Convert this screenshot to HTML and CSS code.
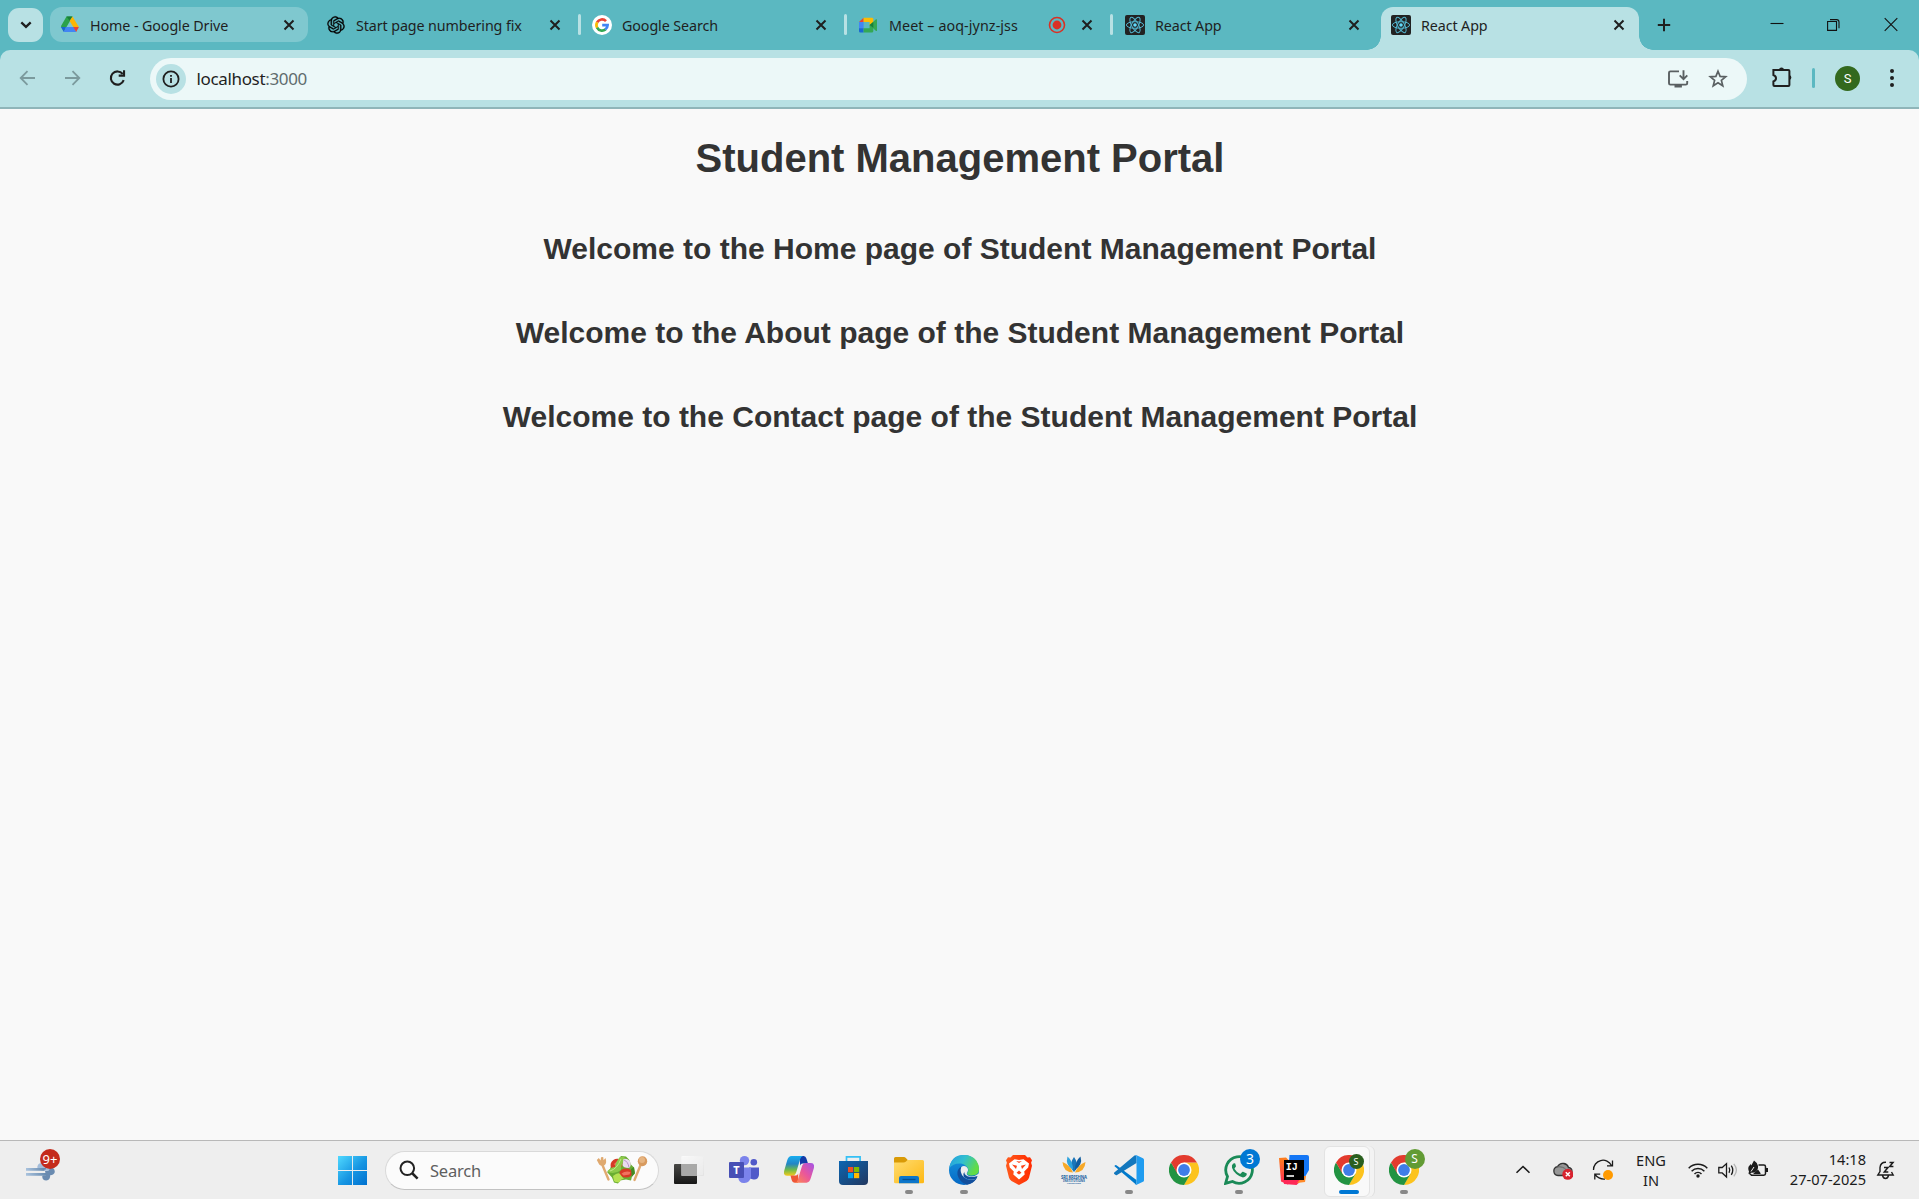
FILE: index.html
```html
<!DOCTYPE html>
<html lang="en">
<head>
<meta charset="utf-8">
<title>React App</title>
<link rel="stylesheet" href="styles.css">
</head>
<body>
<svg class="defs" width="0" height="0" aria-hidden="true">
  <defs>
    <linearGradient id="win" x1="0" y1="0" x2="1" y2="1"><stop offset="0" stop-color="#50d9ff"/><stop offset=".55" stop-color="#1695e2"/><stop offset="1" stop-color="#0070cf"/></linearGradient>
    <linearGradient id="dark" x1="0" y1="0" x2="0" y2="1"><stop offset="0" stop-color="#484846"/><stop offset="1" stop-color="#171716"/></linearGradient>
    <linearGradient id="glass" x1="0" y1="0" x2="1" y2="1"><stop offset="0" stop-color="#fff"/><stop offset="1" stop-color="#ddd"/></linearGradient>
    <linearGradient id="cpA" x1="0" y1="0" x2="0" y2="1"><stop offset="0" stop-color="#18aef0"/><stop offset=".4" stop-color="#2385c5"/><stop offset=".7" stop-color="#6fba4a"/><stop offset="1" stop-color="#f4c91c"/></linearGradient>
    <linearGradient id="cpB" x1="1" y1="0" x2="0" y2="1"><stop offset="0" stop-color="#a254e8"/><stop offset=".5" stop-color="#e9569c"/><stop offset="1" stop-color="#ff8a4c"/></linearGradient>
    <linearGradient id="store" x1="0" y1="0" x2="1" y2="1"><stop offset="0" stop-color="#0b66b2"/><stop offset="1" stop-color="#22375f"/></linearGradient>
    <linearGradient id="folder" x1="0" y1="0" x2="1" y2="1"><stop offset="0" stop-color="#ffdc70"/><stop offset="1" stop-color="#fdb813"/></linearGradient>
    <linearGradient id="edgeTop" x1="0" y1="0" x2="1" y2=".4"><stop offset="0" stop-color="#249ce0"/><stop offset=".5" stop-color="#31bfd0"/><stop offset="1" stop-color="#62dc45"/></linearGradient>
    <linearGradient id="edgeLow" x1="0" y1="0" x2="0" y2="1"><stop offset="0" stop-color="#1797df"/><stop offset="1" stop-color="#0568c4"/></linearGradient>
    <linearGradient id="brave" x1="0" y1="0" x2="1" y2="0"><stop offset="0" stop-color="#ff5a1c"/><stop offset="1" stop-color="#ff2a00"/></linearGradient>
    <linearGradient id="ijA" x1="0" y1="0" x2="0" y2="1"><stop offset="0" stop-color="#fc801d"/><stop offset="1" stop-color="#fe2857"/></linearGradient>
    <linearGradient id="wind" x1="0" y1="0" x2="1" y2="0"><stop offset="0" stop-color="#a9c2dd"/><stop offset="1" stop-color="#6488ad"/></linearGradient>
    <symbol id="x" viewBox="0 0 12 12"><path d="M1.5 1.5l9 9M10.5 1.5l-9 9" stroke="#1f1f1f" stroke-width="2" fill="none"/></symbol>
    <symbol id="react" viewBox="0 0 20 20"><rect width="20" height="20" rx="2" fill="#222"/><g fill="none" stroke="#52b5ce" stroke-width="1"><ellipse cx="10" cy="10" rx="8.6" ry="3.3"/><ellipse cx="10" cy="10" rx="8.6" ry="3.3" transform="rotate(60 10 10)"/><ellipse cx="10" cy="10" rx="8.6" ry="3.3" transform="rotate(120 10 10)"/></g><circle cx="10" cy="10" r="1.8" fill="#61dafb"/></symbol>
    <symbol id="chrome" viewBox="0 0 30 30">
      <path d="M28 7.5A15 15 0 0 1 15 30L21.1 18.5 15 7.5z" fill="#fcc31e"/>
      <path d="M2 7.5A15 15 0 0 0 15 30l6.5-11.3L15 15 8.8 18.6z" fill="#229342"/>
      <path d="M15 7.5H28A15 15 0 0 0 2 7.5l6.5 11.2z" fill="#e33b2e"/>
      <circle cx="15" cy="15" r="7.5" fill="#fff"/><circle cx="15" cy="15" r="5.9" fill="#3f7de8"/>
    </symbol>
  </defs>
</svg>

<header class="tabstrip">
  <button class="tabsearch"><svg width="12" height="8" viewBox="0 0 12 8"><path d="M1.3 1.3L6 5.8l4.7-4.5" fill="none" stroke="#1f1f1f" stroke-width="2.3"/></svg></button>
  <nav class="tabs">
    <div class="tab hovered">
      <svg class="fav" viewBox="0 0 20 20"><path d="M6.5 1.5h6L10 6 4 16.2.9 11.3z" fill="#2ba24c"/><path d="M6.5 1.5h6L9.8 6z" fill="#188038"/><path d="M12.5 1.5L18.9 12h-5.6L9.6 6z" fill="#fbb604"/><path d="M.9 12H6l-2.2 5z" fill="#1967d2"/><path d="M5.9 12h8l2.4 5H3.8z" fill="#4285f4"/><path d="M13.3 12h5.6l-2.7 5z" fill="#ea4335"/></svg>
      <span class="title">Home - Google Drive</span><svg class="close"><use href="#x"/></svg>
    </div>
    <div class="tab">
      <svg class="fav" viewBox="-1.8 -1.8 27.6 27.6"><path stroke="#111" stroke-width=".4" d="M22.2819 9.8211a5.9847 5.9847 0 0 0-.5157-4.9108 6.0462 6.0462 0 0 0-6.5098-2.9A6.0651 6.0651 0 0 0 4.9807 4.1818a5.9847 5.9847 0 0 0-3.9977 2.9 6.0462 6.0462 0 0 0 .7427 7.0966 5.98 5.98 0 0 0 .511 4.9107 6.051 6.051 0 0 0 6.5146 2.9001A5.9847 5.9847 0 0 0 13.2599 24a6.0557 6.0557 0 0 0 5.7718-4.2058 5.9894 5.9894 0 0 0 3.9977-2.9001 6.0557 6.0557 0 0 0-.7475-7.0729zm-9.022 12.6081a4.4755 4.4755 0 0 1-2.8764-1.0408l.1419-.0804 4.7783-2.7582a.7948.7948 0 0 0 .3927-.6813v-6.7369l2.02 1.1686a.071.071 0 0 1 .038.052v5.5826a4.504 4.504 0 0 1-4.4945 4.4944zm-9.6607-4.1254a4.4708 4.4708 0 0 1-.5346-3.0137l.142.0852 4.783 2.7582a.7712.7712 0 0 0 .7806 0l5.8428-3.3685v2.3324a.0804.0804 0 0 1-.0332.0615L9.74 19.9502a4.4992 4.4992 0 0 1-6.1408-1.6464zM2.3408 7.8956a4.485 4.485 0 0 1 2.3655-1.9728V11.6a.7664.7664 0 0 0 .3879.6765l5.8144 3.3543-2.0201 1.1685a.0757.0757 0 0 1-.071 0l-4.8303-2.7865A4.504 4.504 0 0 1 2.3408 7.872zm16.5963 3.8558L13.1038 8.364 15.1192 7.2a.0757.0757 0 0 1 .071 0l4.8303 2.7913a4.4944 4.4944 0 0 1-.6765 8.1042v-5.6772a.79.79 0 0 0-.407-.667zm2.0107-3.0231l-.142-.0852-4.7735-2.7818a.7759.7759 0 0 0-.7854 0L9.409 9.2297V6.8974a.0662.0662 0 0 1 .0284-.0615l4.8303-2.7866a4.4992 4.4992 0 0 1 6.6802 4.66zM8.3065 12.863l-2.02-1.1638a.0804.0804 0 0 1-.038-.0567V6.0742a4.4992 4.4992 0 0 1 7.3757-3.4537l-.142.0805L8.704 5.459a.7948.7948 0 0 0-.3927.6813zm1.0976-2.3654l2.602-1.4998 2.6069 1.4998v2.9994l-2.5974 1.4997-2.6067-1.4997Z"/></svg>
      <span class="title">Start page numbering fix</span><svg class="close"><use href="#x"/></svg>
    </div>
    <div class="tab sep">
      <svg class="fav" viewBox="0 0 20 20"><circle cx="10" cy="10" r="10" fill="#fff"/><g fill="none" stroke-width="2.7"><path d="M5.1 7.4A5.6 5.6 0 0 1 14 6.1" stroke="#ea4335"/><path d="M5.2 12.8A5.6 5.6 0 0 1 5.2 7.2" stroke="#fbbc05"/><path d="M13.5 14.4A5.6 5.6 0 0 1 5.1 12.6" stroke="#34a853"/><path d="M10.2 10.2H15.6A5.6 5.6 0 0 1 13.3 14.5" stroke="#4285f4"/></g></svg>
      <span class="title">Google Search</span><svg class="close"><use href="#x"/></svg>
    </div>
    <div class="tab sep">
      <svg class="fav" viewBox="0 0 20 20"><path d="M5.6 2.7V7H1z" fill="#ea4335"/><path d="M1 7h4.6v6.5H1z" fill="#4285f4"/><path d="M1 13.2h4.6v4.3H2.4A1.4 1.4 0 0 1 1 16z" fill="#1967d2"/><path d="M5.6 2.7h8.2A1.5 1.5 0 0 1 15.3 4v3.6L11.6 10.5V7H5.6z" fill="#fbbc04"/><path d="M5.6 13.2h6V10l3.7 3v3.2a1.4 1.4 0 0 1-1.4 1.3H5.6z" fill="#34a853"/><path d="M11.6 10.1L18 4.3q1-.4 1 .7v10.4q0 1-1 .5z" fill="#34a853"/><path d="M11.6 10.1l3.7-3v6z" fill="#188038"/></svg>
      <span class="title wide">Meet – aoq-jynz-jss</span>
      <svg class="rec" viewBox="0 0 18 18"><circle cx="9" cy="9" r="7.5" fill="none" stroke="#d93025" stroke-width="1.6"/><circle cx="9" cy="9" r="4.4" fill="#d93025"/></svg>
      <svg class="close"><use href="#x"/></svg>
    </div>
    <div class="tab sep late">
      <svg class="fav"><use href="#react"/></svg>
      <span class="title">React App</span><svg class="close"><use href="#x"/></svg>
    </div>
    <div class="tab active">
      <svg class="fav"><use href="#react"/></svg>
      <span class="title">React App</span><svg class="close"><use href="#x"/></svg>
    </div>
  </nav>
  <svg class="newtab" viewBox="0 0 14 14"><path d="M7 .8v12.4M.8 7h12.4" stroke="#1f1f1f" stroke-width="2"/></svg>
  <div class="winctl">
    <svg viewBox="0 0 16 16"><path d="M1.5 6.5h13" stroke="#111" stroke-width="1.1"/></svg>
    <svg viewBox="0 0 16 16"><path d="M1.6 4.5h8.9v8.9H1.6zM4 2.6h6.6a2.4 2.4 0 0 1 2.4 2.4v6.2" fill="none" stroke="#111" stroke-width="1.1"/></svg>
    <svg viewBox="0 0 16 16"><path d="M1.7 1.2l12.6 12.6M14.3 1.2L1.7 13.8" stroke="#111" stroke-width="1.1"/></svg>
  </div>
</header>

<div class="chrome-fill">
<div class="toolbar">
  <svg class="nav" viewBox="0 0 20 20"><path d="M17 10H3M9.5 3.2L2.7 10l6.8 6.8" fill="none" stroke="#7b9a9d" stroke-width="1.8"/></svg>
  <svg class="nav" viewBox="0 0 20 20"><path d="M2 10h14M9.5 3.2l6.8 6.8-6.8 6.8" fill="none" stroke="#7b9a9d" stroke-width="1.8"/></svg>
  <svg class="nav" viewBox="0 0 20 20"><path d="M15.7 12.2A6.6 6.6 0 1 1 14.7 6" fill="none" stroke="#1f1f1f" stroke-width="2.1"/><path d="M17.1 2.3v6.4h-6.4V6.6h4.3V2.3z" fill="#1f1f1f"/></svg>
  <div class="omnibox">
    <span class="siteinfo"><svg width="18" height="18" viewBox="0 0 18 18"><circle cx="9" cy="9" r="7.6" fill="none" stroke="#1f1f1f" stroke-width="1.8"/><path d="M8.1 8h1.8v5H8.1zM8.1 5h1.8v1.8H8.1z" fill="#1f1f1f"/></svg></span>
    <span class="url">localhost<span class="port">:3000</span></span>
    <svg class="install" viewBox="0 0 22 20"><path d="M12 2.4H3.4A1.4 1.4 0 0 0 2 3.8v10.4a1.4 1.4 0 0 0 1.4 1.4h15.4a1.4 1.4 0 0 0 1.4-1.4V12" fill="none" stroke="#5a6062" stroke-width="1.9"/><path d="M7.5 15.5h7.4v3H7.5z" fill="#5a6062"/><path d="M16.5 1.3v8.4M12.7 6.4l3.8 3.8 3.8-3.8" fill="none" stroke="#5a6062" stroke-width="1.9"/></svg>
    <svg class="star" viewBox="0 0 20 20"><path d="M10 2.2l2.1 5.2 5.6.4-4.3 3.6 1.4 5.4L10 13.8l-4.8 3 1.4-5.4L2.3 7.8l5.6-.4z" fill="none" stroke="#5a6062" stroke-width="1.7"/></svg>
  </div>
  <svg class="ext" viewBox="0 0 22 22"><path d="M2.4 4h15a1 1 0 0 1 1 1v14a1 1 0 0 1-1 1H3.4a1 1 0 0 1-1-1v-3.6q2.6-.8 2.6-3.1T2.4 9z" fill="none" stroke="#1f1f1f" stroke-width="2"/><path d="M8 4a2.5 2.5 0 0 1 5 0zM18.5 9a2.6 2.6 0 0 1 0 5z" fill="#1f1f1f"/></svg>
  <span class="divider"></span>
  <span class="avatar">S</span>
  <svg class="menu" viewBox="0 0 6 20"><g fill="#1f1f1f"><circle cx="3" cy="3" r="2"/><circle cx="3" cy="10" r="2"/><circle cx="3" cy="17" r="2"/></g></svg>
</div>
</div>

<main class="page">
  <h1>Student Management Portal</h1>
  <h2>Welcome to the Home page of Student Management Portal</h2>
  <h2>Welcome to the About page of the Student Management Portal</h2>
  <h2>Welcome to the Contact page of the Student Management Portal</h2>
</main>

<footer class="taskbar">
  <div class="weather">
    <svg width="32" height="32" viewBox="0 0 32 32"><path d="M12.500 15q-1-5.500 4-6l8 4v4l-8-.5z" fill="#a3bcd9"/><g fill="none" stroke="url(#wind)" stroke-width="2.800"><path d="M1 15.400h18.500v.1"/><path d="M1 20.400h21v.1"/></g><path d="M20 17h3.500l1.500-3h3q2 1.500 1.800 4-.6 3-4.600 3.300.3 5-4 5.300-3.800 0-4-4.300l1-.7h2.800z" fill="#6a8bb0"/></svg>
    <span class="badge red">9+</span>
  </div>
  <svg class="start" viewBox="0 0 30 30"><path d="M0 0h30v30H0z" fill="url(#win)"/><path d="M14.500 0h1v30h-1zM0 14.500h30v1H0z" fill="#eee"/></svg>
  <div class="search">
    <svg class="mag" viewBox="0 0 20 20"><circle cx="8.300" cy="8.300" r="6.800" fill="none" stroke="#222" stroke-width="2"/><path d="M13 13l5.600 5.600" stroke="#222" stroke-width="2.500"/></svg>
    <span>Search</span>
    <svg class="salad" viewBox="0 0 52 30">
      <g stroke="#e0a970" stroke-width="2.400" stroke-linecap="round"><path d="M6 9l6.500 15.500M45 9l-6.500 16"/></g>
      <path d="M.8 5l2-2 1.800 2.500L5 2.200l2.200-.2.400 3.300L9.500 3q1.800 5-1 7.200-3 1.500-5.300-.7z" fill="#dfa96f"/>
      <ellipse cx="46.500" cy="6.200" rx="4.700" ry="5" fill="#d89a5e"/><ellipse cx="46" cy="5" rx="3" ry="3" fill="#e6b582"/>
      <path d="M11 17l3-3 2-6 6-3 3-4 5 .5 3 3 2 5 3 3 1 6-3 3-1 4-5-1-6 1-2 3-4-1-2-5z" fill="#69ad33"/>
      <ellipse cx="20.500" cy="9.500" rx="6.200" ry="5.500" fill="#d63a26" transform="rotate(-35 20.500 9.500)"/><path d="M18 9l4-3.500 2 2-4 4z" fill="#f0745f"/>
      <ellipse cx="30" cy="18" rx="6.500" ry="4.500" fill="#d63a26"/><path d="M25.500 18.500q4-3 9-1.500l-1 2.500-6 1z" fill="#f0745f"/>
      <path d="M11.500 16q4-4 7.500-4 1-6 5-10 4-1 5 1-4 6-4 12-5 4-12 2.500z" fill="#8dc94a"/>
      <path d="M14 16q7-2 11-12" fill="none" stroke="#c5e88c" stroke-width="1"/>
      <path d="M27.500 4q5-1 7 3.500.8 4-1.500 5.500-6 0-6.500-3z" fill="#e9dcef"/><path d="M28 5q4 1.500 5 7.500" fill="none" stroke="#b48bc6" stroke-width=".9"/>
      <path d="M17 21q5-4 7-2 2 3 4 5-4 0-4 3-4 1-6-1z" fill="#b5e052"/><path d="M35 14l3-2 .8 6-3 4z" fill="#438c24"/>
    </svg>
  </div>
  <nav class="apps">
    <div class="app"><svg viewBox="0 0 30 30"><rect y="9" width="23" height="20" rx="1" fill="url(#dark)"/><rect x="7.500" y="1" width="22.500" height="20" rx="1" fill="url(#glass)"/><path d="M7.500 9H23v12H7.500z" fill="#a9a9a8"/><path d="M7.500 9V1.500H29.500V20.500H23V9z" fill="#f3f3f3" opacity=".6"/></svg></div>
    <div class="app"><svg viewBox="0 0 30 30"><circle cx="15.500" cy="5.600" r="4.700" fill="#7b83eb"/><circle cx="24.800" cy="7.300" r="3.300" fill="#5059c9"/><path d="M20 12.500h10v7.500q-1 5-5.500 4.500T20 21z" fill="#5059c9"/><path d="M9 12.500h13V22q-1 5.500-6.500 6T9 22z" fill="#7b83eb"/><rect y="7" width="15" height="16" rx="1" fill="#474fb5"/><text x="7.500" y="19" text-anchor="middle" class="glyph" font-size="11">T</text></svg></div>
    <div class="app"><svg viewBox="0 0 30 30"><path d="M15.500 1h4.200q2 0 2.700 2.500L24 8.500h-5.500q-1.800 0-2.300 2z" fill="#123ba8"/><path d="M7.500 1H19q-2 .3-2.800 3L12.300 17q-1 3.700-4 3.700H3Q-1.300 20.700.4 15L3 6Q4.300 1 7.500 1z" fill="url(#cpA)"/><path d="M14 27.700h-3q-2.600 0-3.400-3L6.500 20.600H12q1.500 0 2.200-2z" fill="#ee5636"/><path d="M22.500 27.700H11q2-.3 2.800-3l4-13Q18.800 8 22 8h5q4.300 0 2.600 6L27 22.500q-1.500 5.200-4.500 5.200z" fill="url(#cpB)"/></svg></div>
    <div class="app"><svg viewBox="0 0 30 30"><path d="M7.500 7V1.800h13.600V7" fill="none" stroke="#35c0f5" stroke-width="1.700"/><path d="M0 6h29v20q0 4-4 4H4q-4 0-4-4z" fill="url(#store)"/><path d="M9 12h5.200v5.200H9z" fill="#f25022"/><path d="M15 12h5.200v5.200H15z" fill="#7fba00"/><path d="M9 18h5.200v5.200H9z" fill="#00a4ef"/><path d="M15 18h5.200v5.200H15z" fill="#ffb900"/></svg></div>
    <div class="app run"><svg viewBox="0 0 30 30"><path d="M0 8V3.500Q0 2 1.500 2H10q1 0 1.600.8L14 5.200V10H0z" fill="#d99a06"/><path d="M0 7.500h9.500q1.500 0 2.500-1L13.500 5H28.500q1.500 0 1.500 1.500V27q0 1.300-1.500 1.300h-27Q0 28.300 0 27z" fill="url(#folder)"/><path d="M5 28.300v-5.300q0-2 2-2h16q2 0 2 2v5.300z" fill="#0d76ca"/><path d="M8.500 24.500h13" stroke="#064f91" stroke-width="1.300"/></svg></div>
    <div class="app run"><svg viewBox="0 0 30 30"><circle cx="15" cy="15" r="15" fill="url(#edgeLow)"/><path d="M.3 13.200Q2 0 15 0q8 0 12.300 5.500Q30 9.500 30 14q0 6.500-7 6.500-4.500 0-5-2 2-2 1.200-4.500Q17.500 9.500 12 8.500 4 8 .3 13.200z" fill="url(#edgeTop)"/><path d="M12.500 11.500Q7.500 14 8.500 20q2 7.500 9.500 9.700 6-1 9.700-6.300-8 3.500-13-1-4-4.500-2.200-10.900z" fill="#124f9c"/><path d="M12.300 12q2.500-1.800 5-.2 2.700 2.200 1.200 5-1.800 2.500.9 4 5 1.900 10.600-2.300V22l-2.300 1.500Q20 26.500 14.700 22q-4.400-4.500-2.400-10z" fill="#eee"/><path d="M14.700 22q5.300 4.500 13 1.400l.8-2.500q-6 2-10 .3-3.500-2-3.200-4.500-1.600 2-.6 5.300z" fill="#124f9c"/></svg></div>
    <div class="app"><svg viewBox="0 0 30 30"><path d="M9 0h12l2.500 2.600 2.500-.3 2 3-.9 2.500.9 3-3 12q-.6 2-2.500 3.200L15 30l-7.500-4Q5.700 24.800 5 22.800L2 10.800l.9-3L2 5.300l2-3 2.500.3z" fill="url(#brave)"/><path d="M15 5l4.500-.8L25 8.500l-.8 4-4 4 .5 3L15 24.500 9.300 19.500l.5-3-4-4-.8-4 5.500-4.300z" fill="#fff"/><path d="M8 9.500l5 1.200-1 3.300zM22 9.500l-5 1.200 1 3.300zM15 15.500l2.500 2.300-2.500 1.700-2.500-1.700zM12 6l3 2 3-2-3 .6z" fill="#fb4218"/></svg></div>
    <div class="app"><svg viewBox="0 0 30 30"><path d="M15 2q4.500 6 2 12.500L15 17l-2-2.500Q10.500 8 15 2z" fill="#1a75b8"/><path d="M8.500 1.500Q14 6 14 15 6 10 8.500 1.500z" fill="#2fa3dd"/><path d="M21.500 1.500Q16 6 16 15q8-5 5.500-13.500z" fill="#125d9f"/><path d="M3.500 7q7.500 3 10.500 10.500Q4 17 3.500 7zM26.500 7Q19 10 16 17.500 26 17 26.500 7z" fill="#f7a928"/><text x="15" y="23.500" text-anchor="middle" class="tiny" font-size="4.300" textLength="26">SRI KRISHNA</text><text x="15" y="26.700" text-anchor="middle" class="tiny" font-size="3" textLength="22">INSTITUTIONS</text><text x="15" y="29" text-anchor="middle" class="tiny" font-size="2" textLength="14">FOUNDATION</text></svg></div>
    <div class="app run"><svg viewBox="0 0 30 30"><path d="M.3 11.100l.9-.9q.6-.4 1.200 0L22.500 25V30z" fill="#007acc"/><path d="M.3 17.400L20.500.6q2-.7 2 1V8L3 20q-1 .5-1.700-.2L.3 18.900q-.6-.8 0-1.500z" fill="#1277bd"/><path d="M22 0l7 3.300q1 .5 1 1.500v20.400q0 1-1 1.500L22 30q-.8.200-1.500-.5 2 .8 2-1V1.500q0-1.600-2-.9Q21.200-.2 22 0z" fill="#1f9cf0"/></svg></div>
    <div class="app"><svg><use href="#chrome"/></svg></div>
    <div class="app run"><svg viewBox="0 0 30 30"><path d="M1.600 28.400L3.500 21.500A13.300 13.300 0 1 1 8.500 26.500z" fill="#eee" stroke="#1a8a57" stroke-width="2.800"/><path d="M10.500 8.200q-.7-.2-1.500.6-1.600 1.700-1 4 1 3.300 4.300 6.300 3.500 3 6.700 3.300 2.300-.2 3.500-2.200.5-1.300.2-1.700l-3.600-1.800q-.6-.2-1 .3l-1.300 1.600q-.4.400-1 .1-3.500-1.700-5.200-4.700-.2-.5.200-.9l1-1.400q.3-.4.100-.9L11.200 8.600z" fill="#1a8a57"/></svg><span class="badge blue">3</span></div>
    <div class="app"><svg viewBox="0 0 30 30"><path d="M0 3l7-.5 12 12L9 29.500 2 26.500z" fill="url(#ijA)"/><path d="M4 24h20l-6.500 6L5 29z" fill="#fe2857"/><path d="M10.500 0H28q2 0 2 2v13L23 27l-13-20z" fill="#1476f5"/><path d="M24 21h3l-1 6-8 1z" fill="#ff8a2a"/><path d="M5 5h20v20H5z" fill="#000"/><path d="M7.500 20.200h7.500v1.600H7.500z" fill="#fff"/><text x="6.800" y="14.800" class="mono" font-size="10">IJ</text></svg></div>
    <div class="app current"><svg><use href="#chrome"/></svg><span class="badge prof">S</span></div>
    <div class="app run"><svg><use href="#chrome"/></svg><span class="badge prof2">S</span></div>
  </nav>
  <div class="tray">
    <svg class="t1" viewBox="0 0 20 20"><path d="M3.500 12.800L10 6.500l6.500 6.300" fill="none" stroke="#1b1b1b" stroke-width="1.600"/></svg>
    <svg class="t2" viewBox="0 0 20 20"><path d="M5 15.500a4.500 4.500 0 0 1-.5-8.900Q7 2.500 11 3.500q3.500.8 4.500 4 3.500.5 3.500 4t-4 4z" fill="#979797" stroke="#333" stroke-width="1.300"/><path d="M4 7q6-1 9.500 3 3-2 5 0" fill="none" stroke="#666" stroke-width="1"/><circle cx="14.800" cy="14.300" r="5.500" fill="#d8232f"/><path d="M12.800 12.300l4 4M16.800 12.300l-4 4" stroke="#fff" stroke-width="1.500"/></svg>
    <svg class="t3" viewBox="0 0 22 22"><g fill="none" stroke="#1b1b1b" stroke-width="1.300"><path d="M1.500 11A9.500 9.500 0 0 1 19.500 6.500M20.500 1.500v5.300h-5.500M13 20q-6 .5-10-4.500M2.800 20.500v-5.300h5.400"/></g><circle cx="16" cy="16" r="5" fill="#ff9a00"/></svg>
    <div class="lang">ENG<br>IN</div>
    <svg class="t4" viewBox="0 0 20 20"><g fill="none" stroke="#1b1b1b" stroke-width="1.500"><path d="M.7 8.200a13.200 13.200 0 0 1 18.600 0M3.600 11.200a9 9 0 0 1 12.800 0M6.500 14a5 5 0 0 1 7 0"/></g><circle cx="10" cy="16" r="1.700" fill="#1b1b1b"/></svg>
    <svg class="t5" viewBox="0 0 20 20"><g fill="none" stroke="#1b1b1b" stroke-width="1.300"><path d="M.8 7.500h3.400L8.500 3.600v13.300l-4.300-4H.8zM11 7.500q1.600 2.600 0 5.300M13.300 5.600q3 4.600 0 9.200"/></g><path d="M15.800 3.800q5.300 6.300 0 12.600" fill="none" stroke="#b5b5b5" stroke-width="1.300"/></svg>
    <svg class="t6" viewBox="0 0 20 20"><path d="M10.500 5h5.300q1.700 0 1.700 1.700v6.800q0 1.700-1.700 1.700H3.500L2 13.800" fill="none" stroke="#1b1b1b" stroke-width="1.500"/><path d="M18 8h2v4h-2zM5 14l5-4.500 2.500 3.500V14z" fill="#1b1b1b"/><path d="M6 .5q3.300 2 4 5.500.5 4.500-3.500 6.500l-3.500.3-1.800 1.700-.7-1L1 11.500Q-.3 8.500.7 6.500L2.800 4l.5 1.500z" fill="#1b1b1b"/><path d="M3 11.500L6 7" stroke="#eee" stroke-width="1"/></svg>
    <div class="clock">14:18<br>27-07-2025</div>
    <svg class="t7" viewBox="0 0 20 20"><g fill="none" stroke="#1b1b1b" stroke-width="1.400"><path d="M10 2.200Q4.500 2 4 7.500v4L1.800 15h15.400l-1.700-3M6.500 15.500q.7 3 3 3t3-3"/><path d="M8 7.500h4L8.300 12h4M13.500 2.500h3.500l-3.300 4h3.700" stroke-width="1.500"/></g></svg>
  </div>
</footer>
</body>
</html>
```
FILE: styles.css
```css
* { box-sizing: border-box; }
html, body { height: 100%; }
body {
  margin: 0;
  display: flex;
  flex-direction: column;
  overflow: hidden;
  background: #f9f9f9;
  color: #1f1f1f;
  font-family: "Noto Sans", "Open Sans", sans-serif;
}
svg { display: block; flex: none; }
.defs { position: absolute; }
button { border: 0; padding: 0; }

.tabstrip {
  display: flex;
  flex: none;
  height: 50px;
  background: #5bb8c1;
}
.tabsearch {
  display: flex;
  align-items: center;
  justify-content: center;
  width: 35px;
  height: 34px;
  margin: 8px 7px 0 8px;
  border-radius: 11px;
  background: #b8e1e4;
}
.tabs { display: flex; gap: 8px; padding-top: 7px; }
.tab {
  position: relative;
  display: flex;
  align-items: center;
  width: 258px;
  height: 35px;
  padding: 0 13px 0 10px;
  border-radius: 12px;
}
.tab.hovered { background: #7fc8cf; }
.tab.late { padding: 0 12px 0 11px; }
.tab.active {
  height: 43px;
  padding-right: 14px;
  padding-bottom: 8px;
  margin-left: 1px;
  border-radius: 12px 12px 0 0;
  background: #b8e1e4;
}
.tab.active::before, .tab.active::after {
  content: "";
  position: absolute;
  bottom: 0;
  width: 14px;
  height: 14px;
}
.tab.active::before { left: -14px; background: radial-gradient(circle at 0 0, transparent 13.5px, #b8e1e4 14px); }
.tab.active::after { right: -14px; background: radial-gradient(circle at 100% 0, transparent 13.5px, #b8e1e4 14px); }
.tab.sep::before {
  content: "";
  position: absolute;
  left: -4px;
  top: 7px;
  width: 3px;
  height: 21px;
  border-radius: 2px;
  background: #b8e1e4;
}
.fav { width: 20px; height: 20px; }
.title {
  flex: 1;
  margin-left: 10px;
  padding-top: 1px;
  font-size: 14.3px;
  letter-spacing: -0.1px;
  white-space: nowrap;
}
.title.wide { margin-left: 11px; letter-spacing: 0.08px; }
.close { width: 12px; height: 12px; }
.rec { width: 18px; height: 18px; margin-right: 15px; }
.newtab { width: 14px; height: 14px; margin: 18px 0 0 18px; }
.winctl { display: flex; gap: 41px; margin: 17px 20px 0 auto; }
.winctl svg { width: 16px; height: 16px; }

.chrome-fill { flex: none; background: #5bb8c1; }
.toolbar {
  display: flex;
  align-items: center;
  height: 59px;
  padding: 0 0 1px 18px;
  border-bottom: 2px solid #8fb5b9;
  border-radius: 10px 10px 0 0;
  background: #b8e1e4;
}
.nav { width: 20px; height: 20px; margin-right: 25px; }
.omnibox {
  display: flex;
  flex: none;
  align-items: center;
  width: 1597px;
  height: 42px;
  margin: 1px 0 0 -3px;
  padding: 0 19px 0 6px;
  border-radius: 21px;
  background: #ecf8f8;
}
.siteinfo {
  display: flex;
  align-items: center;
  justify-content: center;
  width: 30px;
  height: 30px;
  border-radius: 50%;
  background: #b8e1e4;
}
.url {
  flex: 1;
  margin-left: 10.5px;
  font-size: 17px;
  letter-spacing: -0.35px;
  color: #1f1f1f;
}
.port { color: #5f6c6e; }
.install { width: 22px; height: 20px; margin-right: 19px; }
.star { width: 20px; height: 20px; }
.ext { width: 22px; height: 22px; margin: -3px 19px 0 24px; }
.divider { width: 3px; height: 20px; border-radius: 2px; background: #5bb8c1; }
.avatar {
  width: 25px;
  height: 25px;
  margin: 0 29px 0 20px;
  border-radius: 50%;
  background: #33691e;
  color: #fff;
  font: 13px/25px Roboto, sans-serif;
  text-align: center;
}
.menu { width: 6px; height: 20px; }

.page {
  flex: 1;
  padding: 25px 0 0 1px;
  color: #333;
  font-family: "Liberation Sans", Arial, sans-serif;
  text-align: center;
}
.page h1 { margin: 0 0 46px; font-size: 40px; line-height: 48px; }
.page h2 { margin: 42px 0 0; font-size: 30px; line-height: 42px; }

.taskbar {
  display: flex;
  flex: none;
  align-items: center;
  height: 59px;
  border-top: 1px solid #b8b8b8;
  background: #eee;
}
.weather { position: relative; width: 338px; height: 32px; padding-left: 25px; }
.badge {
  position: absolute;
  width: 20px;
  height: 20px;
  border-radius: 50%;
  color: #fff;
  font-size: 14px;
  line-height: 20px;
  text-align: center;
}
.red { left: 40px; top: -5px; background: #c42b1c; font-size: 13px; }
.start { width: 29px; height: 29px; }
.search {
  display: flex;
  align-items: center;
  width: 274px;
  height: 39px;
  margin-left: 17.5px;
  padding: 0 10px 0 13px;
  border: 1px solid #d9d9d9;
  border-bottom-color: #c2c2c2;
  border-radius: 20px;
  background: #fbfbfb;
  color: #5f5f5f;
  font-size: 16.5px;
}
.search span { flex: 1; margin-left: 11.5px; letter-spacing: -0.2px; }
.mag { width: 20px; height: 20px; }
.salad { width: 52px; height: 30px; }
.apps { display: flex; margin-left: 2.5px; }
.app {
  position: relative;
  display: flex;
  align-items: center;
  justify-content: center;
  width: 55px;
  height: 58px;
}
.app svg { position: relative; width: 30px; height: 30px; }
.app.run::after, .app.current::after {
  content: "";
  position: absolute;
  bottom: 5px;
  width: 8px;
  height: 4px;
  border-radius: 2px;
  background: #888;
}
.app.current::after { width: 20px; background: #0078d4; }
.app.current::before {
  content: "";
  position: absolute;
  left: 3px;
  top: 5px;
  width: 44px;
  height: 49px;
  border: 1px solid #e3e3e3;
  border-radius: 6px;
  background: #f9f9f9;
  box-shadow: 4px 0 0 #f3f3f3, 5px 0 0 #e0e0e0;
}
.blue { left: 29px; top: 8px; background: #0078d4; }
.prof { left: 27.5px; top: 13px; width: 15px; height: 15px; background: #2a5f1e; font-size: 9px; line-height: 15px; }
.prof2 { left: 28.5px; top: 8px; background: #629b34; font-size: 12px; }
.glyph { fill: #fff; font-family: "Noto Sans", sans-serif; font-weight: 700; }
.mono { fill: #fff; font-family: "Liberation Mono", monospace; font-weight: 700; }
.tiny { fill: #1a5f9e; font-family: "Noto Sans", sans-serif; font-weight: 700; }

.tray {
  display: flex;
  align-items: center;
  margin-left: auto;
  padding-right: 23px;
  color: #1b1b1b;
  font-size: 14.6px;
  line-height: 20px;
}
.tray svg { width: 20px; height: 20px; }
.tray .t2 { margin-left: 20px; }
.tray .t3 { width: 22px; height: 22px; margin-left: 19px; }
.lang { width: 38px; margin: -1px 0 0 18px; text-align: center; }
.tray .t4 { margin-left: 18px; }
.tray .t5 { margin-left: 10px; }
.tray .t6 { margin-left: 10px; }
.clock { width: 90px; margin: -2px 10px 0 8px; text-align: right; white-space: nowrap; }
```
